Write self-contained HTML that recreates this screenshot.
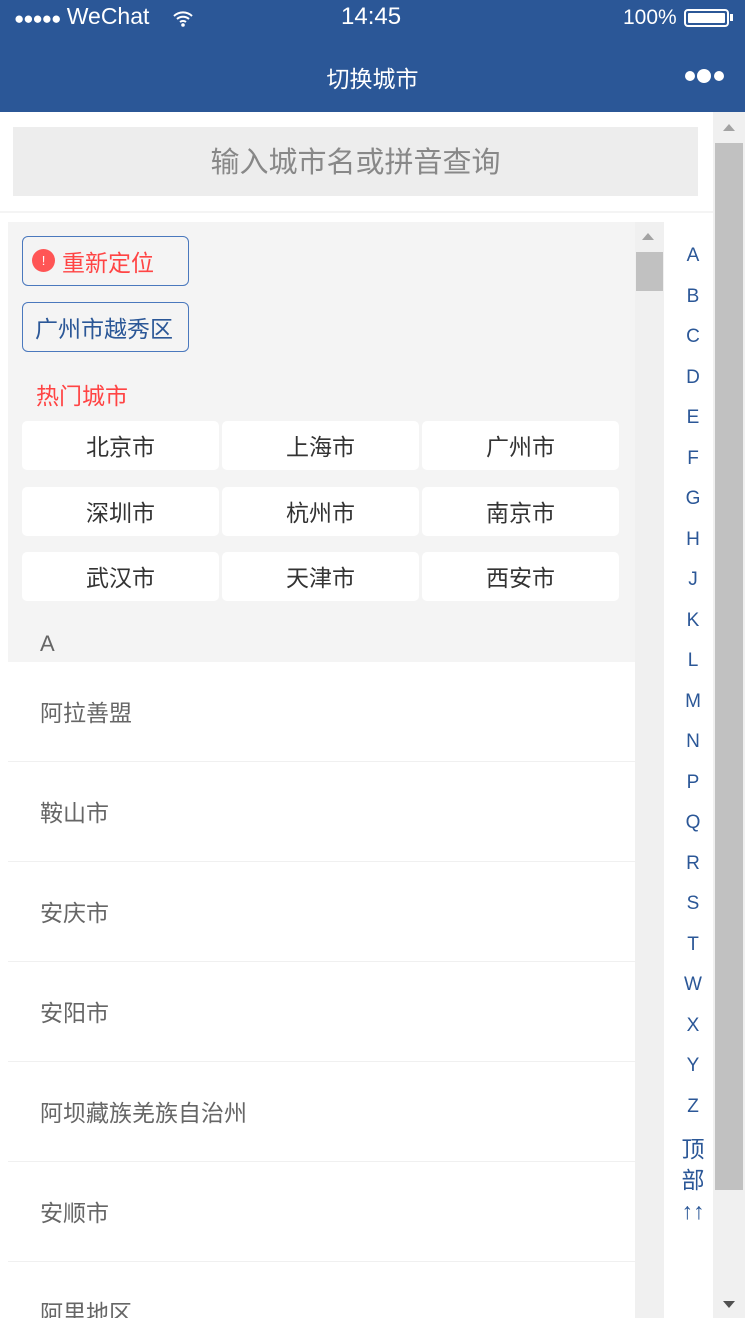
<!DOCTYPE html>
<html><head><meta charset="utf-8"><style>
*{margin:0;padding:0;box-sizing:border-box}
html,body{width:745px;height:1318px;overflow:hidden}
body{background:#fff;font-family:"Liberation Sans","Noto Sans CJK SC",sans-serif;position:relative}
.hdr{position:absolute;left:0;top:0;width:745px;height:112px;background:#2b5797;color:#fff}
.abs{position:absolute}
.search{position:absolute;left:13px;top:127px;width:685px;height:69px;background:#ededed;color:#888;font-size:29px;text-align:center;line-height:72px}
.panel{position:absolute;left:8px;top:222px;width:627px;height:1100px;background:#f4f4f4}
.btn{position:absolute;left:22px;width:167px;height:50px;border:1px solid #4a78bd;border-radius:6px;background:#f4f4f4;font-size:23px;line-height:52px}
.cell{position:absolute;width:197px;height:49px;background:#fff;border-radius:5px;font-size:23px;color:#333;text-align:center;line-height:53px}
.row{position:absolute;left:8px;width:627px;height:100px;background:#fff;border-bottom:1px solid #f0f0f0;font-size:23px;color:#666;padding-left:32px;line-height:103px}
.idx{position:absolute;left:673px;width:40px;text-align:center;color:#2b5797;font-size:19px}
</style></head><body>
<div class="hdr">
 <div class="abs" style="left:14px;top:3px;font-size:23px"><span style="font-size:17px;letter-spacing:-1px">●●●●●</span> WeChat</div>
 <svg class="abs" style="left:172px;top:9px" width="22" height="18" viewBox="0 0 22 18"><path d="M2 7a13 13 0 0 1 18 0M5 10a9 9 0 0 1 12 0M8 13a5 5 0 0 1 6 0" stroke="#fff" stroke-width="2" fill="none"/><circle cx="11" cy="16" r="1.8" fill="#fff"/></svg>
 <div class="abs" style="left:341px;top:3px;font-size:24px">14:45</div>
 <div class="abs" style="left:623px;top:6px;font-size:21px">100%</div>
 <div class="abs" style="left:684px;top:9px;width:45px;height:18px;border:2px solid #fff;border-radius:4px;padding:2px"><div style="background:#fff;width:100%;height:100%;border-radius:1px"></div></div>
 <div class="abs" style="left:730px;top:14px;width:3px;height:7px;background:#fff"></div>
 <div class="abs" style="left:0;top:60px;width:745px;text-align:center;font-size:23px">切换城市</div>
 <svg class="abs" style="left:684px;top:66px" width="42" height="20"><circle cx="6" cy="10" r="5" fill="#fff"/><circle cx="20" cy="10" r="7" fill="#fff"/><circle cx="35" cy="10" r="5" fill="#fff"/></svg>
</div>
<div class="search">输入城市名或拼音查询</div>
<div class="abs" style="left:0;top:211px;width:713px;height:2px;background:#f4f4f4"></div>
<div class="panel"></div>
<div class="btn" style="top:236px;color:#f44;padding-left:39px"><span class="abs" style="left:9px;top:12px;width:23px;height:23px;border-radius:50%;background:#f55;color:#fff;font-size:13px;line-height:23px;text-align:center">!</span>重新定位</div>
<div class="btn" style="top:302px;color:#2b5797;padding-left:12px">广州市越秀区</div>
<div class="abs" style="left:36px;top:377px;font-size:23px;color:#f44">热门城市</div>
<div class="cell" style="left:22px;top:421px">北京市</div><div class="cell" style="left:222px;top:421px">上海市</div><div class="cell" style="left:422px;top:421px">广州市</div>
<div class="cell" style="left:22px;top:487px">深圳市</div><div class="cell" style="left:222px;top:487px">杭州市</div><div class="cell" style="left:422px;top:487px">南京市</div>
<div class="cell" style="left:22px;top:552px">武汉市</div><div class="cell" style="left:222px;top:552px">天津市</div><div class="cell" style="left:422px;top:552px">西安市</div>
<div class="abs" style="left:40px;top:631px;font-size:22px;color:#666">A</div>
<div class="row" style="top:662px">阿拉善盟</div>
<div class="row" style="top:762px">鞍山市</div>
<div class="row" style="top:862px">安庆市</div>
<div class="row" style="top:962px">安阳市</div>
<div class="row" style="top:1062px">阿坝藏族羌族自治州</div>
<div class="row" style="top:1162px">安顺市</div>
<div class="row" style="top:1262px">阿里地区</div>
<div class="abs" style="left:635px;top:222px;width:29px;height:1096px;background:#f0f0f0"></div>
<div class="abs" style="left:636px;top:252px;width:27px;height:39px;background:#c1c1c1"></div>
<div class="abs" style="left:642px;top:233px;width:0;height:0;border-left:6px solid transparent;border-right:6px solid transparent;border-bottom:7px solid #a3a3a3"></div>
<div class="abs" style="left:713px;top:112px;width:32px;height:1206px;background:#f0f0f0"></div>
<div class="abs" style="left:715px;top:143px;width:28px;height:1047px;background:#c1c1c1"></div>
<div class="abs" style="left:723px;top:124px;width:0;height:0;border-left:6px solid transparent;border-right:6px solid transparent;border-bottom:7px solid #a3a3a3"></div>
<div class="abs" style="left:723px;top:1301px;width:0;height:0;border-left:6px solid transparent;border-right:6px solid transparent;border-top:7px solid #505050"></div>
<div class="idx" style="top:245px">A</div><div class="idx" style="top:286px">B</div><div class="idx" style="top:326px">C</div><div class="idx" style="top:367px">D</div><div class="idx" style="top:407px">E</div><div class="idx" style="top:448px">F</div><div class="idx" style="top:488px">G</div><div class="idx" style="top:529px">H</div><div class="idx" style="top:569px">J</div><div class="idx" style="top:610px">K</div><div class="idx" style="top:650px">L</div><div class="idx" style="top:691px">M</div><div class="idx" style="top:731px">N</div><div class="idx" style="top:772px">P</div><div class="idx" style="top:812px">Q</div><div class="idx" style="top:853px">R</div><div class="idx" style="top:893px">S</div><div class="idx" style="top:934px">T</div><div class="idx" style="top:974px">W</div><div class="idx" style="top:1015px">X</div><div class="idx" style="top:1055px">Y</div><div class="idx" style="top:1096px">Z</div>
<div class="idx" style="top:1134px;font-size:23px;line-height:31px">顶<br>部<br>↑↑</div>
</body></html>
